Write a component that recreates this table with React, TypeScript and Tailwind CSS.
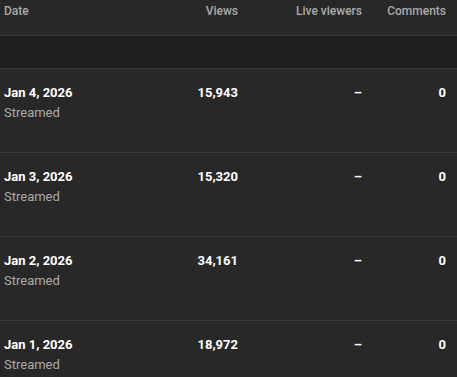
import React from 'react';

interface StreamRow {
  date: string;
  views: string;
  liveViewers: string;
  comments: string;
}

const rows: StreamRow[] = [
  { date: 'Jan 4, 2026', views: '15,943', liveViewers: '–', comments: '0' },
  { date: 'Jan 3, 2026', views: '15,320', liveViewers: '–', comments: '0' },
  { date: 'Jan 2, 2026', views: '34,161', liveViewers: '–', comments: '0' },
  { date: 'Jan 1, 2026', views: '18,972', liveViewers: '–', comments: '0' },
];

const App: React.FC = () => {
  return (
    <div className="w-[457px] h-[377px] overflow-hidden bg-[#282828] font-['Roboto',sans-serif]">
      {/* Header */}
      <div className="flex h-[36px] pt-[3px] pr-[11px] border-b border-[#3a3a3a] text-[12px] leading-4 font-medium text-[#aaaaaa]">
        <div className="flex-1 pl-[4px]">Date</div>
        <div className="w-[100px] text-right">Views</div>
        <div className="w-[124px] text-right">Live viewers</div>
        <div className="w-[84px] text-right">Comments</div>
      </div>

      {/* Empty band */}
      <div className="h-[33px] bg-[#1f1f1f] border-b border-[#3a3a3a]" />

      {/* Rows */}
      {rows.map((row) => (
        <div
          key={row.date}
          className="flex h-[84px] pt-[14px] pr-[11px] border-b border-[#3a3a3a] text-[13px] leading-5"
        >
          <div className="flex-1 pl-[4px]">
            <div className="font-bold text-white">{row.date}</div>
            <div className="text-[#aaaaaa]">Streamed</div>
          </div>
          <div className="w-[100px] text-right font-bold text-white">{row.views}</div>
          <div className="w-[124px] text-right font-bold text-white">{row.liveViewers}</div>
          <div className="w-[84px] text-right font-bold text-white">{row.comments}</div>
        </div>
      ))}
    </div>
  );
};

export default App;
